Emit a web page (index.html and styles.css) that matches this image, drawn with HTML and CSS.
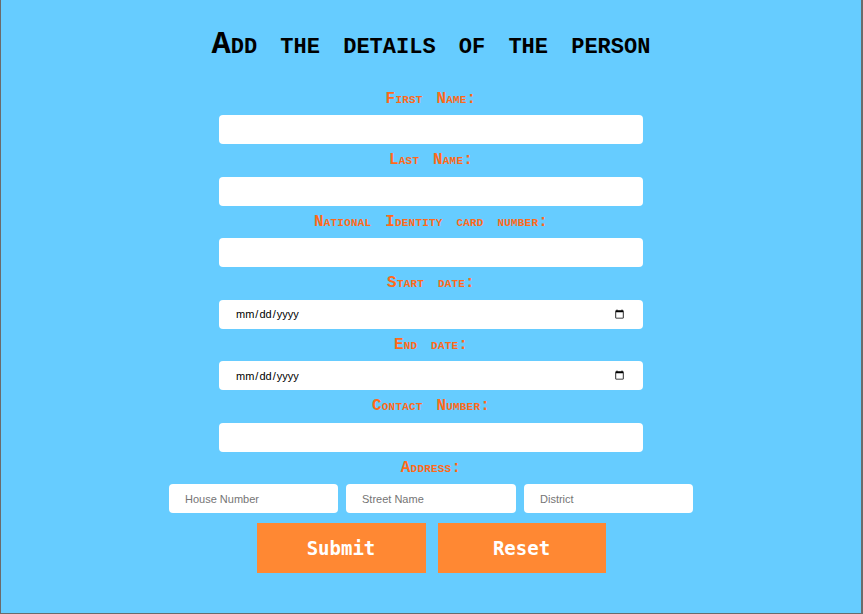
FILE: index.html
```html
<!DOCTYPE html>
<html lang="en">
<head>
<meta charset="utf-8">
<title>Add the details of the person</title>
<link rel="stylesheet" href="styles.css">
</head>
<body>
<div class="page">
  <h1 class="title">Add the details of the person</h1>
  <form class="form">
    <div class="field">
      <label class="label" for="fname">First Name:</label>
      <input class="input" id="fname" type="text">
    </div>
    <div class="field">
      <label class="label" for="lname">Last Name:</label>
      <input class="input" id="lname" type="text">
    </div>
    <div class="field">
      <label class="label" for="nic">National Identity card number:</label>
      <input class="input" id="nic" type="text">
    </div>
    <div class="field">
      <label class="label" for="sdate">Start date:</label>
      <input class="input" id="sdate" type="date">
    </div>
    <div class="field">
      <label class="label" for="edate">End date:</label>
      <input class="input" id="edate" type="date">
    </div>
    <div class="field">
      <label class="label" for="phone">Contact Number:</label>
      <input class="input" id="phone" type="text">
    </div>
    <div class="field">
      <label class="label">Address:</label>
      <div class="address-row">
        <input class="input input-small" type="text" placeholder="House Number">
        <input class="input input-small input-mid" type="text" placeholder="Street Name">
        <input class="input input-small" type="text" placeholder="District">
      </div>
    </div>
    <div class="actions">
      <button class="btn" type="submit">Submit</button>
      <button class="btn btn-reset" type="reset">Reset</button>
    </div>
  </form>
</div>
</body>
</html>
```
FILE: styles.css
```css
html, body {
  margin: 0;
  padding: 0;
}

body {
  background: #66ccff;
}

.page {
  box-sizing: border-box;
  width: 863px;
  height: 614px;
  background: #66ccff;
  border-left: 1px solid #6b6b6b;
  border-right: 2px solid #6b6b6b;
  border-bottom: 1px solid #6b6b6b;
  padding-top: 27px;
  display: flex;
  flex-direction: column;
  align-items: center;
}

.title {
  margin: 0;
  font-family: "Liberation Mono", "Courier New", monospace;
  font-weight: bold;
  font-size: 32px;
  line-height: 36px;
  font-variant: small-caps;
  word-spacing: 4px;
  color: #000;
  text-align: center;
}

.form {
  margin-top: 27.5px;
  display: flex;
  flex-direction: column;
  align-items: center;
  gap: 8px;
}

.field {
  display: flex;
  flex-direction: column;
  align-items: center;
}

.label {
  font-family: "Liberation Mono", "Courier New", monospace;
  font-weight: bold;
  font-size: 16px;
  line-height: 17.5px;
  font-variant: small-caps;
  word-spacing: 4px;
  letter-spacing: 0.2px;
  color: #ff6a1a;
  margin-bottom: 7px;
}

.input {
  box-sizing: border-box;
  width: 424px;
  height: 29px;
  border: none;
  border-radius: 4px;
  background: #fff;
  padding: 0 16px;
  font-family: "Liberation Sans", Arial, sans-serif;
  font-size: 11px;
  color: #000;
  outline: none;
}

.input::placeholder {
  color: #757575;
}

.address-row {
  display: flex;
  gap: 8px;
}

.input-small {
  width: 169px;
}

.input-mid {
  width: 170px;
}

.actions {
  margin-top: 2px;
  display: flex;
  gap: 12px;
}

.btn {
  width: 169px;
  height: 50px;
  border: none;
  border-radius: 0;
  background: #ff8833;
  color: #fff;
  font-family: "DejaVu Sans Mono", monospace;
  font-weight: bold;
  font-size: 19px;
  padding: 0;
}

.btn-reset {
  width: 168px;
}
```
